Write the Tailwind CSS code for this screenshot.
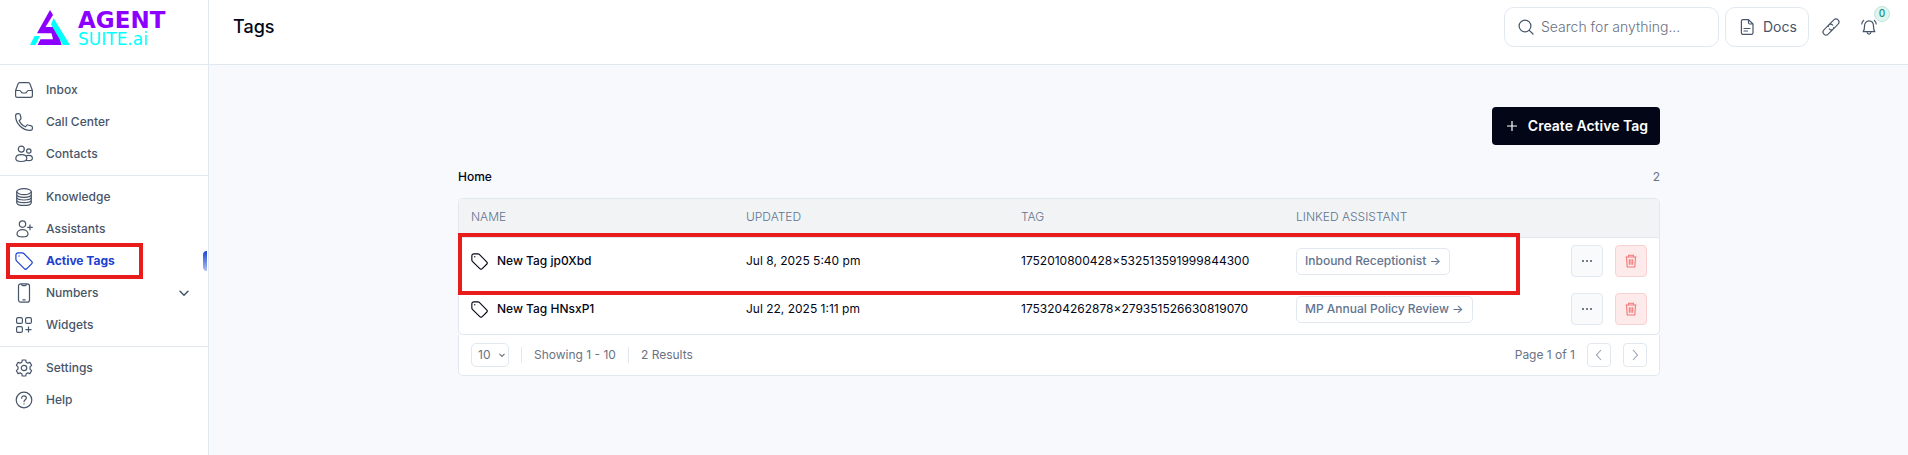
<!DOCTYPE html>
<html lang="en">
<head>
  <meta charset="UTF-8" />
  <meta name="viewport" content="width=device-width, initial-scale=1.0"/>
  <title>Tags - AgentSuite.ai</title>
  <script src="https://cdn.jsdelivr.net/npm/@tailwindcss/browser@4"></script>
</head>
<body class="bg-[#f8f9fd] min-h-screen flex font-['Inter',sans-serif] text-xs text-[#020617]">

  <!-- Shared icons -->
  <svg class="hidden">
    <symbol id="tag" viewBox="0 0 18 18" fill="none" stroke="currentColor" stroke-width="1.2" stroke-linejoin="round">
      <path d="M.9 3.200C.9 1.800 1.800.9 3.200.9h4.100c.6 0 1.100.2 1.500.6l7.800 7.800c.8.8.8 1.800 0 2.600l-4.700 4.700c-.8.8-1.800.8-2.600 0L1.500 8.800C1.100 8.400.9 7.900.9 7.300z"/>
      <circle cx="4" cy="4" r=".7" fill="currentColor" stroke="none"/>
    </symbol>
    <symbol id="trash" viewBox="0 0 14 14" fill="none" stroke="currentColor" stroke-width="1.1" stroke-linejoin="round">
      <path d="M1.500 3h11M4.500 3V1.200h5V3M2.500 3l.7 10h7.600l.7-10M5.300 5.200v5.600M7 5.200v5.600M8.700 5.200v5.600"/>
    </symbol>
  </svg>

  <aside class="w-[209px] shrink-0 bg-white border-r border-slate-200">
    <a href="#" class="flex items-start gap-2 h-[65px] pl-[30px] pt-[10px] border-b border-slate-200">
      <svg class="w-10 h-9 shrink-0" viewBox="0 0 40 36">
        <path fill="#8b00ff" d="M20 0l3 5-7.500 12H26l5.700 18H7.500l3-5.700H23l-1.500-6H7z"/>
        <path fill="#00ffff" d="M23.500 8L40 35h-7L21 14.500zM4.500 26H10l-4.500 9H0z"/>
      </svg>
      <span class="flex flex-col font-['DejaVu_Sans',sans-serif]">
        <span class="text-[23px] leading-[21px] font-bold text-[#8b00ff]">AGENT</span>
        <span class="text-[17px] leading-[17px] text-[#00ffff]">SUITE.ai</span>
      </span>
    </a>

    <nav class="text-[#475569] font-medium">
      <div class="pt-[9px] pb-[5px] border-b border-slate-200">
        <a href="#" class="flex items-center gap-[13px] h-8 pl-[15px]">
          <svg class="w-[18px] h-[18px]" viewBox="0 0 18 18" fill="none" stroke="currentColor" stroke-width="1.2" stroke-linejoin="round"><path d="M.6 9.500L3 3c.3-.9.900-1.400 1.800-1.400h8.400c.9 0 1.500.5 1.800 1.400l2.400 6.500v5c0 1.100-.7 1.900-1.900 1.900h-13C1.300 16.400.6 15.600.6 14.500zM.6 9.500h4c1 0 1.200.6 1.500 1.300.3.800.9 1.200 1.700 1.200h2.400c.8 0 1.400-.4 1.700-1.200.3-.7.500-1.300 1.500-1.300h4"/></svg>
          Inbox
        </a>
        <a href="#" class="flex items-center gap-[13px] h-8 pl-[15px]">
          <svg class="w-[18px] h-[18px]" viewBox="0 0 18 18" fill="none" stroke="currentColor" stroke-width="1.2" stroke-linejoin="round"><path d="M.6 2.700C.6 1.500 1.500.6 2.700.6h1.100c.7 0 1.200.4 1.400 1.100l.8 3.300c.1.600-.1 1.100-.5 1.500L4.200 7.500c1.100 2.700 3.500 5.100 6.300 6.300l1-1.300c.4-.5.900-.7 1.500-.5l3.300.8c.7.2 1.100.7 1.100 1.400v1.100c0 1.200-.9 2.100-2.100 2.100C7.400 17.400.6 10.600.6 2.700z"/></svg>
          Call Center
        </a>
        <a href="#" class="flex items-center gap-[13px] h-8 pl-[15px]">
          <svg class="w-[18px] h-[18px]" viewBox="0 0 18 18" fill="none" stroke="currentColor" stroke-width="1.2"><circle cx="6.300" cy="4.100" r="3"/><circle cx="13.800" cy="6" r="2.200"/><path d="M.8 13.500c0-2.300 2.400-3.800 5.500-3.800s5.500 1.500 5.500 3.800c0 2-1.700 3-5.500 3s-5.500-1-5.500-3zM11.200 11c.7-.4 1.500-.6 2.400-.6 2.300 0 3.800 1.200 3.800 2.800 0 1.700-1.500 2.400-3.500 2.400-.9 0-1.700-.1-2.500-.4"/></svg>
          Contacts
        </a>
      </div>

      <div class="py-[5px] border-b border-slate-200">
        <a href="#" class="flex items-center gap-[13px] h-8 pl-[15px]">
          <svg class="w-[18px] h-[18px]" viewBox="0 0 18 18" fill="none" stroke="currentColor" stroke-width="1.2"><ellipse cx="9" cy="3.600" rx="7.300" ry="3"/><path d="M1.700 3.600v10.800c0 1.700 3.300 3 7.300 3s7.300-1.300 7.300-3V3.600M1.700 6.300c0 1.700 3.300 3 7.300 3s7.300-1.300 7.300-3M1.700 9c0 1.700 3.300 3 7.300 3s7.300-1.300 7.300-3M1.700 11.700c0 1.700 3.300 3 7.300 3s7.300-1.300 7.300-3"/></svg>
          Knowledge
        </a>
        <a href="#" class="flex items-center gap-[13px] h-8 pl-[15px]">
          <svg class="w-[18px] h-[18px]" viewBox="0 0 18 18" fill="none" stroke="currentColor" stroke-width="1.2"><circle cx="7.500" cy="4.100" r="3.200"/><path d="M2 14c0-2.400 2.300-4.400 5.500-4.400S13 11.600 13 14c0 2-1.800 2.900-5.500 2.900S2 16 2 14zM15 4.600v5.600M12.200 7.400h5.600"/></svg>
          Assistants
        </a>
        <a href="#" class="relative flex items-center gap-[13px] h-8 pl-[15px] font-bold text-[#1d40d0]" aria-current="page">
          <svg class="w-[18px] h-[18px]"><use href="#tag"/></svg>
          Active Tags
          <span class="absolute left-[6px] -top-[2px] w-[137px] h-9 border-4 border-[#e91c1c]"></span>
          <span class="absolute right-[1px] top-[6px] w-1 h-5 rounded-l bg-linear-to-b from-[#1d40d0] to-[#b5c0f0]"></span>
        </a>
        <a href="#" class="flex items-center gap-[13px] h-8 pl-[15px] pr-[18px]">
          <svg class="w-[18px] h-[18px] overflow-visible" viewBox="0 0 18 18" fill="none" stroke="currentColor" stroke-width="1.2"><rect x="3.500" y="-.1" width="11" height="18.200" rx="2.200"/><path d="M6.500.2c.2 1 .6 1.400 1.300 1.400h2.400c.7 0 1.100-.4 1.300-1.400M7.500 15.800h3"/></svg>
          Numbers
          <svg class="w-3 h-3 ml-auto" viewBox="0 0 12 12" fill="none" stroke="currentColor" stroke-width="1.5" stroke-linecap="round"><path d="M2 4.200l4 4 4-4"/></svg>
        </a>
        <a href="#" class="flex items-center gap-[13px] h-8 pl-[15px]">
          <svg class="w-[18px] h-[18px]" viewBox="0 0 18 18" fill="none" stroke="currentColor" stroke-width="1.2"><rect x="1.600" y="1.600" width="5.800" height="5.800" rx="1.500"/><rect x="10.600" y="1.600" width="5.800" height="5.800" rx="1.500"/><rect x="1.600" y="10.600" width="5.800" height="5.800" rx="1.500"/><path d="M13.500 10.600v6M10.500 13.600h6"/></svg>
          Widgets
        </a>
      </div>

      <div class="py-[5px]">
        <a href="#" class="flex items-center gap-[13px] h-8 pl-[15px]">
          <svg class="w-[18px] h-[18px]" viewBox="0 0 18 18" fill="none" stroke="currentColor" stroke-width="1.2" stroke-linejoin="round"><circle cx="9" cy="9" r="2.700"/><path d="M7.300 1h3.400l.5 2.200 1.500.9 2.200-.7 1.700 2.900L15 7.900v2.200l1.600 1.600-1.700 2.900-2.200-.7-1.500.9-.5 2.200H7.300l-.5-2.200-1.500-.9-2.200.7-1.700-2.900L3 10.100V7.900L1.400 6.300l1.700-2.900 2.200.7 1.500-.9z"/></svg>
          Settings
        </a>
        <a href="#" class="flex items-center gap-[13px] h-8 pl-[15px]">
          <svg class="w-[18px] h-[18px]" viewBox="0 0 18 18" fill="none" stroke="currentColor" stroke-width="1.2" stroke-linecap="round"><circle cx="9" cy="9" r="7.800"/><path d="M6.700 7.200C6.700 5.700 7.700 4.800 9 4.800s2.300.8 2.300 2.100c0 1.800-2.300 1.900-2.300 3.800M9 12.900v.2"/></svg>
          Help
        </a>
      </div>
    </nav>
  </aside>

  <div class="flex-1 min-w-0">
    <header class="flex items-start h-[65px] pl-6 pr-[31px] pt-[7px] bg-white border-b border-slate-200">
      <h1 class="text-lg leading-10 font-medium">Tags</h1>

      <div class="ml-auto flex items-center text-[#475569]">
        <label class="flex items-center gap-[7px] w-[215px] h-10 pl-[13px] pr-3 mr-[6px] border border-slate-200 rounded-[10px]">
          <svg class="w-4 h-4 shrink-0" viewBox="0 0 16 16" fill="none" stroke="currentColor" stroke-width="1.2" stroke-linecap="round"><circle cx="7" cy="7" r="5.900"/><path d="M11.300 11.300l3.700 3.700"/></svg>
          <input type="text" aria-label="Search" placeholder="Search for anything..." class="w-full min-w-0 text-sm font-light outline-none placeholder:text-gray-500" />
        </label>
        <button class="flex items-center gap-2 w-[84px] h-10 pl-[13px] mr-[14px] border border-slate-200 rounded-[10px] text-sm">
          <svg class="w-4 h-4" viewBox="0 0 16 16" fill="none" stroke="currentColor" stroke-width="1.2" stroke-linejoin="round" stroke-linecap="round"><path d="M4 .6h5.500L14 5v8.800c0 1-.6 1.600-1.600 1.600H4c-1 0-1.600-.6-1.600-1.600V2.200C2.400 1.200 3 .6 4 .6zM9.500.8v3c0 .8.400 1.200 1.200 1.200h3M5 9.500h6M5 12h3.500"/></svg>
          Docs
        </button>
        <button class="mr-[22px]" aria-label="Copy link">
          <svg class="w-4 h-4 overflow-visible" viewBox="0 0 16 16" fill="none" stroke="currentColor" stroke-width="1.1" stroke-linecap="round"><g transform="rotate(-45 8 8)"><path d="M9.500 10.200c-.4.500-1 .8-1.700.8H1a3 3 0 0 1 0-6h6.500a3 3 0 0 1 3 3M6.500 5.800C6.900 5.300 7.500 5 8.200 5H15a3 3 0 0 1 0 6H8.500a3 3 0 0 1-3-3"/></g></svg>
        </button>
        <button class="relative" aria-label="Notifications">
          <svg class="w-4 h-4" viewBox="0 0 16 16" fill="none" stroke="currentColor" stroke-width="1.2" stroke-linecap="round" stroke-linejoin="round"><path d="M2.200 12.700c1.100-1.300 1.300-2.700 1.300-5.500C3.500 4 5.300 1.800 8 1.800s4.500 2.200 4.500 5.400c0 2.800.2 4.200 1.300 5.500zM6 13c.2 1.400 1 2.100 2 2.100s1.800-.7 2-2.100M2.600 1.500C1.500 2.400.9 3.600.8 5M13.400 1.500c1.100.9 1.700 2.100 1.800 3.500"/></svg>
          <span class="absolute left-[13px] -top-[13px] flex items-center justify-center w-4 h-4 rounded-full border border-[#bfe5dd] bg-[#e0f4f0] text-[10px] font-medium text-[#0d9488]">0</span>
        </button>
      </div>
    </header>

    <main class="max-w-[1203px] mx-auto pl-px pt-[42px]">
      <div class="flex justify-end">
        <button class="flex items-center gap-2 h-[38px] px-3 rounded bg-[#020617] text-white text-sm font-semibold">
          <svg class="w-4 h-4" viewBox="0 0 16 16" fill="none" stroke="currentColor" stroke-width="1.2"><path d="M8 3v10M3 8h10"/></svg>
          Create Active Tag
        </button>
      </div>

      <div class="flex items-center justify-between h-8 mt-4 mb-[5px]">
        <h2 class="font-medium">Home</h2>
        <span class="text-gray-500">2</span>
      </div>

      <div class="relative">
        <div class="pb-px border border-slate-200 rounded-[5px] bg-white overflow-hidden">
          <table class="w-full table-fixed text-left">
            <thead>
              <tr class="h-[38px] bg-[#f1f3f5] border-b border-slate-200 text-slate-500">
                <th class="px-3 pb-0.5 font-light">NAME</th>
                <th class="px-3 pb-0.5 font-light">UPDATED</th>
                <th class="px-3 pb-0.5 font-light">TAG</th>
                <th class="px-3 pb-0.5 font-light">LINKED ASSISTANT</th>
                <th class="w-[100px]"></th>
              </tr>
            </thead>
            <tbody>
              <tr class="h-12">
                <td class="px-3">
                  <div class="flex items-center gap-[9px] font-medium"><svg class="w-[17px] h-[17px]"><use href="#tag"/></svg>New Tag jp0Xbd</div>
                </td>
                <td class="px-3">Jul 8, 2025 5:40 pm</td>
                <td class="px-3">1752010800428×532513591999844300</td>
                <td class="px-3"><a href="#" class="inline-flex items-center h-[27px] px-2 border border-slate-200 rounded-[5px] font-medium text-slate-500">Inbound Receptionist →</a></td>
                <td class="px-3">
                  <div class="flex gap-3">
                    <button aria-label="More" class="flex items-center justify-center w-8 h-8 border border-slate-200 rounded bg-slate-50"><svg class="w-3 h-3" viewBox="0 0 12 12" fill="#334155"><circle cx="2" cy="6" r=".9"/><circle cx="6" cy="6" r=".9"/><circle cx="10" cy="6" r=".9"/></svg></button>
                    <button aria-label="Delete" class="flex items-center justify-center w-8 h-8 border border-[#fbd0d0] rounded bg-[#fdeaea] text-[#f47575]"><svg class="w-[14px] h-[14px]"><use href="#trash"/></svg></button>
                  </div>
                </td>
              </tr>
              <tr class="h-12">
                <td class="px-3">
                  <div class="flex items-center gap-[9px] font-medium"><svg class="w-[17px] h-[17px]"><use href="#tag"/></svg>New Tag HNsxP1</div>
                </td>
                <td class="px-3">Jul 22, 2025 1:11 pm</td>
                <td class="px-3">1753204262878×279351526630819070</td>
                <td class="px-3"><a href="#" class="inline-flex items-center h-[27px] px-2 border border-slate-200 rounded-[5px] font-medium text-slate-500">MP Annual Policy Review →</a></td>
                <td class="px-3">
                  <div class="flex gap-3">
                    <button aria-label="More" class="flex items-center justify-center w-8 h-8 border border-slate-200 rounded bg-slate-50"><svg class="w-3 h-3" viewBox="0 0 12 12" fill="#334155"><circle cx="2" cy="6" r=".9"/><circle cx="6" cy="6" r=".9"/><circle cx="10" cy="6" r=".9"/></svg></button>
                    <button aria-label="Delete" class="flex items-center justify-center w-8 h-8 border border-[#fbd0d0] rounded bg-[#fdeaea] text-[#f47575]"><svg class="w-[14px] h-[14px]"><use href="#trash"/></svg></button>
                  </div>
                </td>
              </tr>
            </tbody>
          </table>
        </div>

        <!-- Highlight around the first row -->
        <div class="absolute left-0 top-[35px] w-[1062px] h-[62px] border-4 border-[#e91c1c] pointer-events-none"></div>
      </div>

      <div class="flex items-center h-[41px] px-3 border border-t-0 border-slate-200 rounded-b-[5px] bg-white text-gray-500">
        <div class="relative">
          <select aria-label="Rows per page" class="block appearance-none w-[38px] h-6 pl-[6px] border border-slate-200 rounded-[5px] text-xs">
            <option>10</option>
            <option>25</option>
            <option>50</option>
          </select>
          <svg class="absolute right-[3px] top-2 w-2 h-2 pointer-events-none" viewBox="0 0 8 8" fill="none" stroke="currentColor" stroke-width="1.2"><path d="M1.500 2.800L4 5.300l2.500-2.500"/></svg>
        </div>
        <span class="ml-3 pl-3 border-l border-slate-200">Showing 1 - 10</span>
        <span class="ml-3 pl-3 border-l border-slate-200">2 Results</span>
        <span class="ml-auto mr-3">Page 1 of 1</span>
        <button aria-label="Previous page" class="flex items-center justify-center w-6 h-6 mr-3 border border-slate-200 rounded text-gray-400"><svg class="w-3 h-3" viewBox="0 0 12 12" fill="none" stroke="currentColor" stroke-width="1.1"><path d="M8 1L3.500 6 8 11"/></svg></button>
        <button aria-label="Next page" class="flex items-center justify-center w-6 h-6 border border-slate-200 rounded text-gray-400"><svg class="w-3 h-3" viewBox="0 0 12 12" fill="none" stroke="currentColor" stroke-width="1.1"><path d="M4 1l4.500 5L4 11"/></svg></button>
      </div>
    </main>
  </div>

</body>
</html>
